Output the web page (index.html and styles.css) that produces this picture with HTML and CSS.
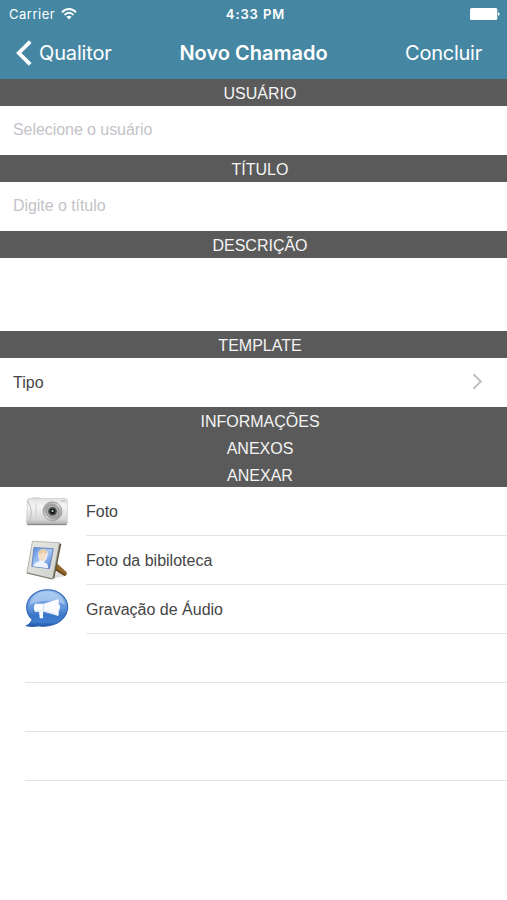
FILE: index.html
```html
<!DOCTYPE html>
<html lang="pt-BR">
  <head>
    <meta charset="utf-8">
    <meta name="viewport" content="width=device-width, initial-scale=1">
    <title>Novo Chamado</title>
    <link rel="stylesheet" href="styles.css">
  </head>
  <body>
    <header class="topbar">
      <div class="status">
        <div class="carrier">
          <span>Carrier</span>
          <svg width="16" height="12" viewBox="0 0 16 12" fill="none" stroke="#fff" stroke-width="1.9">
            <path d="M1 4.4C5-.1 11-.1 15 4.4"/>
            <path d="M3.5 7C6 4 10 4 12.5 7"/>
            <path d="M8 11.5 5.4 8.8C7 7.3 9 7.3 10.6 8.8Z" fill="#fff" stroke="none"/>
          </svg>
        </div>
        <span class="clock">4:33 PM</span>
        <svg class="battery" width="30" height="12" viewBox="0 0 30 12" fill="#fff">
          <rect x="0" y="0" width="27.3" height="12" rx="1.5"/>
          <path d="M28 4.2c2.200.6 2.200 3 0 3.600z"/>
        </svg>
      </div>
      <nav class="nav">
        <a class="back">
          <svg width="16" height="26" viewBox="0 0 16 26" fill="none" stroke="#fff" stroke-width="3.8">
            <path d="M14.2 1.6 2.8 13l11.4 11.4"/>
          </svg>
          <span>Qualitor</span>
        </a>
        <h1 class="title">Novo Chamado</h1>
        <a class="done">Concluir</a>
      </nav>
    </header>

    <main>
      <h2 class="section">USUÁRIO</h2>
      <input class="field" type="text" placeholder="Selecione o usuário">

      <h2 class="section">TÍTULO</h2>
      <input class="field" type="text" placeholder="Digite o título">

      <h2 class="section">DESCRIÇÃO</h2>
      <textarea class="description"></textarea>

      <h2 class="section">TEMPLATE</h2>
      <div class="row">
        <span>Tipo</span>
        <svg class="chevron" width="11" height="17" viewBox="0 0 11 17" fill="none" stroke="#c0c0c4" stroke-width="2">
          <path d="M1.5 1.3 8.8 8.5l-7.3 7.2"/>
        </svg>
      </div>

      <div class="sections">
        <h2 class="section">INFORMAÇÕES</h2>
        <h2 class="section">ANEXOS</h2>
        <h2 class="section">ANEXAR</h2>
      </div>

      <ul class="list">
        <li class="item">
          <!-- câmera -->
          <svg class="icon" width="44" height="42" viewBox="0 0 44 42">
            <defs>
              <linearGradient id="body" x1="0" y1="0" x2="0" y2="1">
                <stop offset="0" stop-color="#e2e2e2"/>
                <stop offset=".3" stop-color="#f5f5f5"/>
                <stop offset=".8" stop-color="#d6d6d6"/>
                <stop offset="1" stop-color="#a4a4a4"/>
              </linearGradient>
              <linearGradient id="ring" x1="0" y1="0" x2="1" y2="1">
                <stop offset="0" stop-color="#8d8d8d"/>
                <stop offset=".5" stop-color="#dadada"/>
                <stop offset="1" stop-color="#858585"/>
              </linearGradient>
            </defs>
            <path d="M7 7.5V6.700h3.500v.8M11 7.500V6.500h3v1" fill="#eee" stroke="#d4d4d4" stroke-width=".6"/>
            <path d="M2.500 8.500Q3 7.500 5 7.500h35q2.300 0 2.300 2v22q0 2.500-2 2.500H3.500q-2 0-2-2z" fill="url(#body)" stroke="#c6c6c6" stroke-width=".7"/>
            <path d="M2.500 9.500q6.500 10 2 21" fill="none" stroke="#b9b9b9" stroke-width=".9"/>
            <path d="M11 12.500v14" fill="none" stroke="#d0d0d0" stroke-width="1"/>
            <path d="M2.500 33.500h39" stroke="#858585" stroke-width="1"/>
            <rect x="36" y="9" width="4.500" height="2" rx=".6" fill="#c9c9c9"/>
            <circle cx="27.500" cy="20.300" r="9.500" fill="url(#ring)" stroke="#999" stroke-width=".8"/>
            <circle cx="27.500" cy="20.300" r="6.800" fill="#adadad" stroke="#8a8a8a" stroke-width=".8"/>
            <circle cx="27.500" cy="20.300" r="4.400" fill="#525555"/>
            <circle cx="27.500" cy="20.300" r="2.800" fill="#161819"/>
            <circle cx="27.500" cy="20" r="1" fill="#d8e4e4"/>
          </svg>
          <span class="label">Foto</span>
        </li>
        <li class="item">
          <!-- porta-retrato -->
          <svg class="icon" width="44" height="42" viewBox="0 0 44 42">
            <defs>
              <linearGradient id="frame" x1="0" y1="0" x2="1" y2="1">
                <stop offset="0" stop-color="#e9e9e4"/>
                <stop offset="1" stop-color="#d0d1cd"/>
              </linearGradient>
              <linearGradient id="photo" x1="0" y1="0" x2="1" y2="1">
                <stop offset="0" stop-color="#5a89dc"/>
                <stop offset=".5" stop-color="#a8c8f5"/>
                <stop offset="1" stop-color="#4474cb"/>
              </linearGradient>
            </defs>
            <path d="M28 38.500 41 36l-8-6z" fill="#dedcd8"/>
            <path d="M31.500 23 41.500 32q1.200 2.500-1.500 4L29.500 30z" fill="#93662b"/>
            <path d="M31 29.500 40 35.500" stroke="#5c3b13" stroke-width="1.300"/>
            <path d="M33.500 2.800 36.300 4 29.300 38.500l-3.300.5z" fill="#5c543d"/>
            <path d="M7.500 1.200 34.500 2.800 27.500 39 1.800 32.800z" fill="url(#frame)" stroke="#a4a69e" stroke-width=".8"/>
            <path d="m2 33 25.500 6" stroke="#7c7c70" stroke-width="1.200"/>
            <path d="M9 7.500 28.300 8.700 24.500 28.500 6.800 26.500z" fill="url(#photo)" stroke="#5577b5" stroke-width=".8"/>
            <path d="m8 26.300 2.500-3.500 4-1.500v-2q-2-3-.8-7.500 1.500-3 5.300-2.500 4.500 1 3.500 6-.5 4-3 6l-.2 1 3.200 2 .8 4z" fill="#edf2fb"/>
            <path d="M13.800 14q1.500-4 5.200-3 3 1.300 1.900 5-.6 4-3.400 5-3.200-.3-3.900-4z" fill="#f3dcc8"/>
            <path d="M13.300 14.500q.2-5.700 5.500-5.300 3.700 1 3.100 5-2.300-.3-3.500-2.500-2 2.500-5.100 2.800z" fill="#e5ce9e"/>
          </svg>
          <span class="label">Foto da bibiloteca</span>
        </li>
        <li class="item">
          <!-- megafone -->
          <svg class="icon" width="44" height="42" viewBox="0 0 44 42">
            <defs>
              <linearGradient id="bubble" x1="0" y1="0" x2="0" y2="1">
                <stop offset="0" stop-color="#8fb8eb"/>
                <stop offset=".5" stop-color="#6096db"/>
                <stop offset=".7" stop-color="#3a76c8"/>
                <stop offset=".88" stop-color="#3f7dd0"/>
                <stop offset="1" stop-color="#1f50a0"/>
              </linearGradient>
            </defs>
            <path d="M22.500.8C34 .8 42.600 8.500 42.600 18S34.500 34.500 25 36.500q-6 1.300-11 .2-7 1.300-12.500 0 5-2.700 5.700-6.400C3.500 27.500 1.700 23 1.700 18.300 1.700 8.500 10.500.8 22.500.8z" fill="url(#bubble)" stroke="#2c62b4" stroke-width="1.100"/>
            <path d="M4.500 16Q7 3 22.300 2.300 37 3 40 15.500 22 8 4.500 16z" fill="#c5ddf8" opacity=".55"/>
            <path d="M10 14.700h8.500L32.500 10.600q1.200-.3 1.200.8v3.500q1.300.8 1.300 3.400t-1.300 3.400v4.300q0 1-1.200.7L19 22.700h-1v6q0 .5-.5.500h-2.200q-.5 0-.6-.5l-.7-6h-4q-2.200-3.800 0-8z" fill="#fbfcff"/>
            <path d="M18.700 15v7.500" stroke="#b9cdea" stroke-width=".8"/>
            <path d="M11 21.800h8l13 3.900" fill="none" stroke="#dce5f3" stroke-width="1"/>
          </svg>
          <span class="label">Gravação de Áudio</span>
        </li>
        <li class="item empty"></li>
        <li class="item empty"></li>
        <li class="item empty"></li>
      </ul>
    </main>
  </body>
</html>
```

FILE: styles.css
```css
* {
  box-sizing: border-box;
}

body {
  margin: 0;
  min-height: 900px;
  background: #fff;
  color: #454545;
  font-family: "Liberation Sans", Arial, sans-serif;
  font-size: 16px;
}

svg {
  display: block;
  flex: none;
}

/* barra superior */
.topbar {
  height: 79px;
  background: #4587a3;
  color: #fff;
  font-family: Inter, Roboto, sans-serif;
}

.status {
  display: grid;
  grid-template-columns: 1fr auto 1fr;
  align-items: center;
  height: 27px;
  padding: 0 7px 0 9px;
  font-size: 13px;
}

.carrier {
  display: flex;
  align-items: center;
  gap: 6px;
  letter-spacing: 0.5px;
}

.clock {
  margin-left: 2px;
  font-weight: 600;
  letter-spacing: 0.9px;
}

.battery {
  justify-self: end;
}

.nav {
  display: grid;
  grid-template-columns: 1fr auto 1fr;
  align-items: center;
  height: 52px;
  padding: 0 25px 0 16px;
  font-size: 20px;
  letter-spacing: -0.15px;
}

.back {
  display: flex;
  align-items: center;
  gap: 7px;
}

.title {
  margin: 0 0 0 9px;
  font-size: 20px;
  font-weight: 600;
  letter-spacing: 0;
}

.done {
  justify-self: end;
  letter-spacing: -0.25px;
}

/* formulário */
.section {
  height: 27px;
  margin: 0;
  padding: 1px 0 0 13px;
  background: #5a5a5a;
  color: #f4f4f4;
  font-size: 16px;
  font-weight: normal;
  line-height: 27px;
  text-align: center;
}

.sections {
  height: 80px;
  overflow: hidden;
}

.field,
.description {
  display: block;
  width: 100%;
  height: 49px;
  margin: 0;
  padding: 0 13px 2px;
  border: 0;
  background: #fff;
  font: inherit;
  letter-spacing: -0.06px;
  resize: none;
}

.field::placeholder {
  color: #c3c3c7;
}

.description {
  height: 73px;
}

.row {
  display: flex;
  align-items: center;
  justify-content: space-between;
  height: 49px;
  padding: 0 24px 0 13px;
}

.chevron {
  margin-bottom: 2px;
}

/* lista de anexos */
.list {
  margin: 0;
  padding: 0 0 0 25px;
  list-style: none;
}

.item {
  display: flex;
  align-items: stretch;
  height: 49px;
}

.icon {
  margin: 4px 17px 0 0;
}

.label {
  flex: 1;
  border-bottom: 1px solid #e4e4e6;
  line-height: 49px;
}

.empty {
  border-bottom: 1px solid #e4e4e6;
}
```
